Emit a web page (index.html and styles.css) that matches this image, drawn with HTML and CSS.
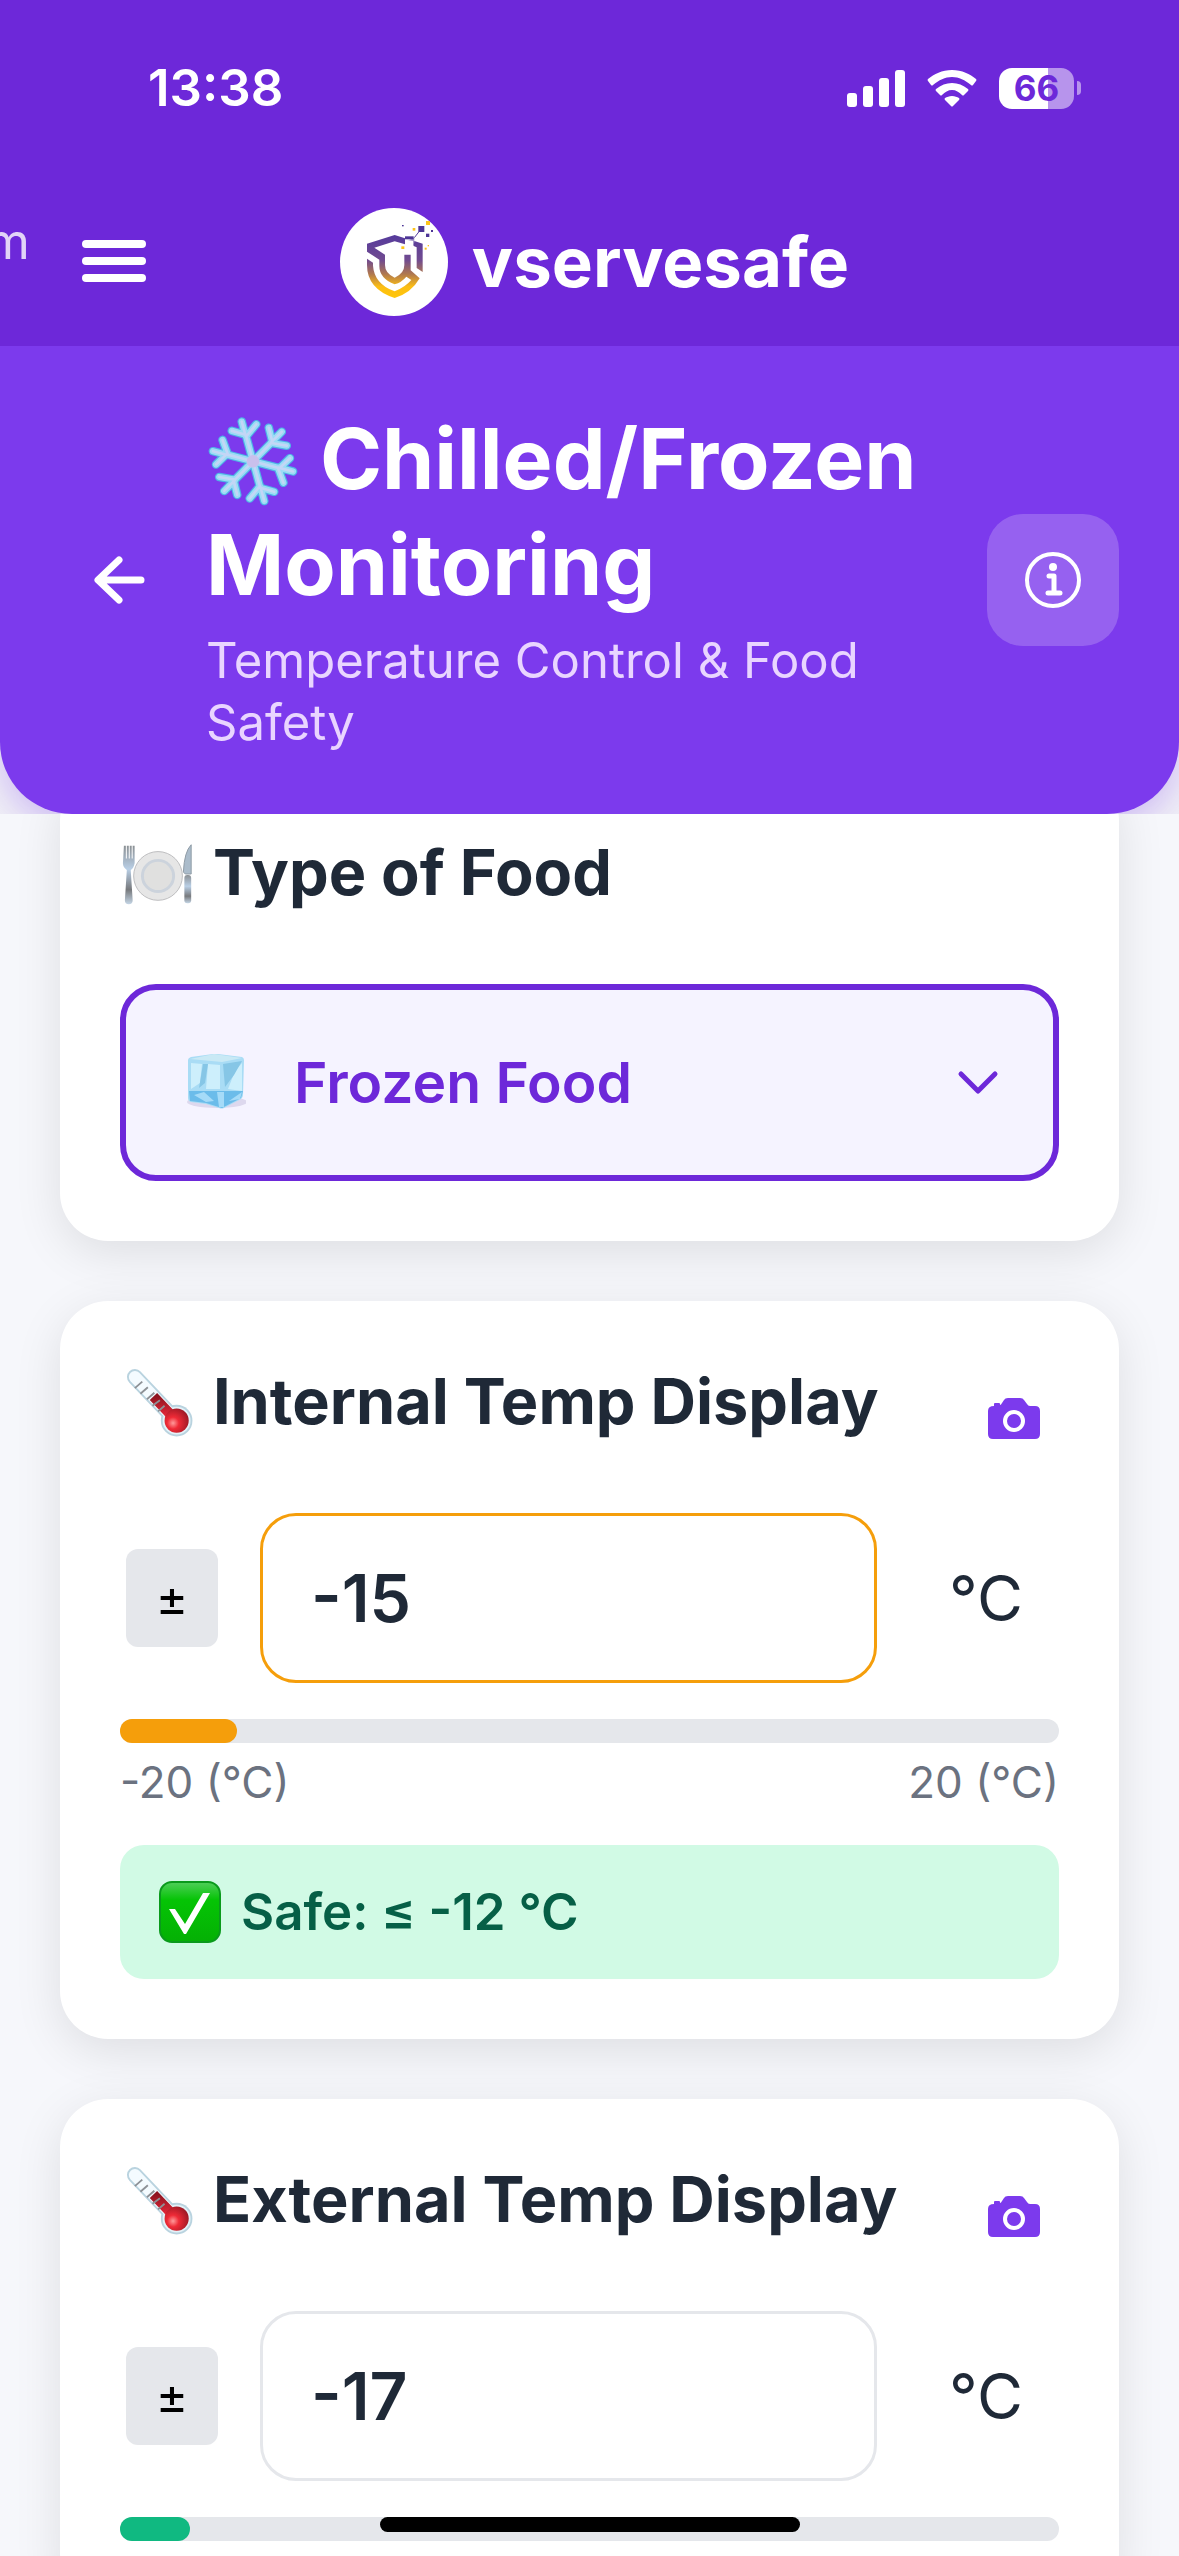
FILE: index.html
```html
<!DOCTYPE html>
<html lang="en">
<head>
  <meta charset="UTF-8">
  <meta name="viewport" content="width=device-width, initial-scale=1.0">
  <title>Chilled/Frozen Monitoring</title>
  <link rel="stylesheet" href="styles.css">
</head>
<body>

  <!-- shared icons -->
  <svg class="sprite" aria-hidden="true">
    <defs>
      <linearGradient id="redBulb" x1="0" y1="0" x2="0" y2="1">
        <stop offset="0" stop-color="#8e1420"/>
        <stop offset="1" stop-color="#e8283a"/>
      </linearGradient>
      <radialGradient id="bulbShine" cx="0.35" cy="0.6" r="0.7">
        <stop offset="0" stop-color="#ff9a9a"/>
        <stop offset="0.35" stop-color="#ef2a36"/>
        <stop offset="1" stop-color="#981824"/>
      </radialGradient>
      <symbol id="thermometer" viewBox="-3 -1 84 84">
        <path d="M13 13 L52 54" stroke="#b9d3df" stroke-width="17" stroke-linecap="round"/>
        <circle cx="58" cy="60" r="17" fill="#b9d3df"/>
        <path d="M13 13 L52 54" stroke="#f4fbff" stroke-width="13" stroke-linecap="round"/>
        <circle cx="58" cy="60" r="15" fill="#e4f2f8"/>
        <path d="M33 34 L54 56" stroke="url(#redBulb)" stroke-width="11"/>
        <path d="M13 25 l8 -7 M19 31 l8 -7 M26 37 l8 -7 M32 44 l8 -6 M38 50 l7 -6" stroke="#8d9196" stroke-width="2"/>
        <circle cx="58" cy="60" r="13" fill="url(#bulbShine)"/>
      </symbol>
      <symbol id="camera" viewBox="0 0 60 60">
        <path fill="#7c3aed" d="M10 17 V15 Q10 14 11 14 H15 Q16 14 16 15 V16 Q17 16 18 14 L20 11 Q21 9 24 9 H36 Q39 9 40 11 L43 15 Q44 17 46 17 H51 Q56 17 56 22 V45 Q56 50 51 50 H9 Q4 50 4 45 V22 Q4 17 10 17 Z"/>
        <circle cx="30" cy="32" r="9" fill="none" stroke="#fff" stroke-width="4"/>
      </symbol>
    </defs>
  </svg>

  <div class="app">
    <div class="top">
      <div class="status-bar">
        <span class="time">13:38</span>
        <div class="status-icons">
          <svg class="signal" viewBox="0 0 58 37" fill="#fff">
            <rect x="0" y="23" width="10" height="14" rx="3"/>
            <rect x="16" y="16" width="10" height="21" rx="3"/>
            <rect x="32" y="8" width="10" height="29" rx="3"/>
            <rect x="48" y="0" width="10" height="37" rx="3"/>
          </svg>
          <svg class="wifi" viewBox="0 0 50 37" fill="#fff">
            <path d="M25 0 C35 0 43 4 49 9 Q50 10 49 11 L46 15 Q45 16 44 15 C38 10 32 7 25 7 C18 7 12 10 6 15 Q5 16 4 15 L1 11 Q0 10 1 9 C7 4 15 0 25 0 Z"/>
            <path d="M25 13 C31 13 36 15 41 19 Q42 20 41 21 L37 25 Q36 26 35 25 C32 22 29 20 25 20 C21 20 18 22 15 25 Q14 26 13 25 L9 21 Q8 20 9 19 C14 15 19 13 25 13 Z"/>
            <path d="M25 26 C28 26 30 27 32 28 Q33 29 32 30 L26 36 Q25 37 24 36 L18 30 Q17 29 18 28 C20 27 22 26 25 26 Z"/>
          </svg>
          <div class="battery">
            <span class="battery-level">66</span>
            <span class="battery-tip"></span>
          </div>
        </div>
      </div>

      <div class="nav-bar">
        <span class="marquee">m</span>
        <button class="menu-btn" aria-label="Menu">
          <span></span><span></span><span></span>
        </button>
        <div class="brand">
          <svg class="logo" viewBox="33 51 324 324">
            <defs>
              <linearGradient id="shield" gradientUnits="userSpaceOnUse" x1="0" y1="132" x2="0" y2="321">
                <stop offset="0" stop-color="#553a9c"/>
                <stop offset="0.4" stop-color="#714b90"/>
                <stop offset="0.62" stop-color="#b0784f"/>
                <stop offset="0.82" stop-color="#fcbe14"/>
                <stop offset="1" stop-color="#ffc60a"/>
              </linearGradient>
            </defs>
            <circle cx="195" cy="213" r="162" fill="#fff"/>
            <g fill="url(#shield)">
              <path d="M114 158 L197 132 L228 142 V160 L197 151 L136 170 L168 191 V222 Q168 247 197 260 Q226 247 226 222 V191 H245 V238 L272 262 Q247 306 197 321 Q114 294 114 222 V203 L132 215 V224 Q136 279 197 301 Q229 288 247 267 L232 257 Q218 274 197 280 Q151 262 151 225 V206 L114 182 Z"/>
              <path d="M256 150 L281 158 V243 L263 231 V169 L254 165 Z"/>
            </g>
            <path d="M256 140 L270 122" stroke="#553a9c" stroke-width="3"/>
            <g fill="#4d3596">
              <rect x="228" y="136" width="26" height="9"/>
              <path d="M232 151 L256 140 V165 Z" opacity="0.5"/>
              <rect x="268" y="105" width="18" height="18"/>
              <rect x="291" y="128" width="10" height="10"/>
              <rect x="306" y="117" width="6" height="6"/>
              <rect x="219" y="102" width="5" height="4"/>
            </g>
            <path d="M229 146 L252 150 V164 L229 160 Z" fill="#fff"/>
            <g fill="#fdc41a">
              <rect x="291" y="90" width="12" height="12"/>
              <rect x="251" y="111" width="8" height="8"/>
              <rect x="217" y="166" width="9" height="8"/>
              <rect x="287" y="170" width="6" height="6"/>
              <rect x="296" y="162" width="4" height="4"/>
            </g>
          </svg>
          <span class="brand-name">vservesafe</span>
        </div>
      </div>

      <header class="page-header">
        <button class="back-btn" aria-label="Back">
          <svg viewBox="0 0 54 50" fill="none" stroke="#fff" stroke-width="7" stroke-linecap="round" stroke-linejoin="round">
            <path d="M27 5 L6 25 L27 45 M7 25 H49"/>
          </svg>
        </button>
        <div class="header-text">
          <h1><svg class="snowflake" viewBox="-10 -14 280 284" fill="none" stroke-linecap="round">
              <g id="flake" stroke="#4fb4e6" stroke-width="26">
                <g id="arms">
                  <path id="arm" d="M130 132 L108 52 M108 52 L66 40 M108 56 L96 12 M110 56 L140 20"/>
                  <use href="#arm" transform="rotate(60 130 132)"/>
                  <use href="#arm" transform="rotate(120 130 132)"/>
                  <use href="#arm" transform="rotate(180 130 132)"/>
                  <use href="#arm" transform="rotate(240 130 132)"/>
                  <use href="#arm" transform="rotate(300 130 132)"/>
                </g>
              </g>
              <use href="#arms" stroke="#9bdcf5" stroke-width="19"/>
              <use href="#arms" stroke="#c3d6f6" stroke-width="8"/>
              <circle cx="130" cy="132" r="19" fill="#c9c0ec"/>
            </svg> Chilled/Frozen Monitoring</h1>
          <p>Temperature Control &amp; Food Safety</p>
        </div>
        <button class="info-btn" aria-label="Information">
          <svg viewBox="0 0 60 60" fill="none" stroke="#fff" stroke-linecap="round" stroke-linejoin="round">
            <circle cx="30" cy="30" r="26" stroke-width="4"/>
            <path d="M26 26 H31 V43 M25 43 H37" stroke-width="5"/>
            <circle cx="30" cy="17" r="4" fill="#fff" stroke="none"/>
          </svg>
        </button>
      </header>
    </div>

    <main class="content">
      <section class="card">
        <div class="card-header">
          <h2><svg class="emoji" viewBox="1 2 80 80">
              <defs>
                <linearGradient id="steel" x1="0" y1="0" x2="0" y2="1">
                  <stop offset="0" stop-color="#8b9094"/>
                  <stop offset="0.4" stop-color="#b9cfe6"/>
                  <stop offset="0.75" stop-color="#77797c"/>
                  <stop offset="1" stop-color="#c5d6e6"/>
                </linearGradient>
              </defs>
              <path fill="url(#steel)" d="M5 13 h2 v13 h1 v-13 h2 v13 h1 v-13 h2 v13 h1 v-13 h2 l0 18 q-1 5 -4 7 l2 31 q0 4 -4 4 q-4 0 -4 -4 l2 -31 q-4 -3 -4 -7 Z"/>
              <circle cx="40" cy="44" r="25" fill="#e6e6e6" stroke="#bcbcbe" stroke-width="1"/>
              <circle cx="40" cy="44" r="16" fill="#e0e0df" stroke="#ccd3dc" stroke-width="3"/>
              <path fill="#abbccb" stroke="#8f9ba6" d="M74 12 V42 H68 L66 40 Q67 19 74 12 Z"/>
              <rect x="67" y="43" width="7" height="29" rx="3" fill="url(#steel)"/>
            </svg> Type of Food</h2>
        </div>
        <div class="food-select">
          <svg class="ice" viewBox="0 0 60 60">
            <ellipse cx="31" cy="49" rx="30" ry="6" fill="#ddd8ee"/>
            <path fill="#a9dcf5" d="M2 7 Q2 5 5 4 L27 1 Q29 1 32 1 L56 4 Q58 5 58 7 L57 42 Q57 44 55 46 L38 55 Q36 56 33 55 L20 51 L5 49 Q2 48 2 45 Z"/>
            <path fill="#c9e9f5" d="M4 6 L28 1 L56 5 L36 9 Z"/>
            <path fill="#cdeffc" d="M5 10 L16 11 L14 30 L5 36 Z M22 11 L34 12 V36 H20 Z M49 18 L56 10 V38 L42 36 Z"/>
            <path fill="#86c6e6" d="M17 11 L22 11 L19 30 L13 35 Z M37 11 L56 8 L48 22 L39 34 Z"/>
            <path fill="#6bbcea" d="M3 38 L36 38 L57 38 L55 45 L36 55 L20 50 L4 48 Z"/>
            <path fill="#a5dbf8" d="M8 42 L18 39 L28 48 L20 49 Z M31 39 L38 39 V54 L33 54 Z M43 48 L56 39 L54 46 Z"/>
          </svg>
          <select id="foodType" aria-label="Type of Food">
            <option>Frozen Food</option>
          </select>
          <svg class="chevron" viewBox="0 0 42 26" fill="none" stroke="#6d28d9" stroke-width="5" stroke-linecap="round" stroke-linejoin="round">
            <path d="M4 4 L21 21 L38 4"/>
          </svg>
        </div>
      </section>

      <section class="card">
        <div class="card-header">
          <h2><svg class="emoji"><use href="#thermometer"/></svg> Internal Temp Display</h2>
          <button class="camera-btn" aria-label="Take photo"><svg><use href="#camera"/></svg></button>
        </div>
        <div class="temp-row">
          <button class="sign-btn">±</button>
          <input class="temp-input warning" type="text" value="-15" aria-label="Internal temperature">
          <span class="unit">°C</span>
        </div>
        <div class="bar"><div class="bar-fill warning" style="width: 12.5%"></div></div>
        <div class="bar-labels">
          <span>-20 (°C)</span>
          <span>20 (°C)</span>
        </div>
        <div class="safe-box">
          <svg class="check" viewBox="0 0 62 62">
            <defs>
              <linearGradient id="green" x1="0" y1="0" x2="0" y2="1">
                <stop offset="0" stop-color="#4fce5a"/>
                <stop offset="0.3" stop-color="#05c405"/>
                <stop offset="1" stop-color="#04b004"/>
              </linearGradient>
            </defs>
            <rect x="1" y="1" width="60" height="60" rx="12" fill="url(#green)" stroke="#0a9a1c" stroke-width="2"/>
            <path d="M10 28 L16 28 L26 43 L44 12 H51 L27 53 H25 Z" fill="#fff"/>
          </svg>
          <span>Safe: ≤ -12 °C</span>
        </div>
      </section>

      <section class="card">
        <div class="card-header">
          <h2><svg class="emoji"><use href="#thermometer"/></svg> External Temp Display</h2>
          <button class="camera-btn" aria-label="Take photo"><svg><use href="#camera"/></svg></button>
        </div>
        <div class="temp-row">
          <button class="sign-btn">±</button>
          <input class="temp-input" type="text" value="-17" aria-label="External temperature">
          <span class="unit">°C</span>
        </div>
        <div class="bar"><div class="bar-fill safe" style="width: 7.5%"></div></div>
      </section>
    </main>

    <div class="home-indicator"></div>
  </div>

</body>
</html>
```

FILE: styles.css
```css
* {
  box-sizing: border-box;
}

body {
  margin: 0;
  font-family: Inter, "Liberation Sans", sans-serif;
  color: #1f2937;
  background-color: #f6f7fb;
}

button {
  border: none;
  background: none;
  padding: 0;
  font-family: inherit;
  cursor: pointer;
}

h1, h2, p {
  margin: 0;
}

svg {
  display: block;
}

.sprite {
  position: absolute;
  width: 0;
  height: 0;
}

.app {
  height: 100vh;
  overflow: hidden;
}

/* top area */
.top {
  position: relative;
  z-index: 1;
  overflow: hidden;
  background-color: #f1f1f6;
}

.status-bar {
  display: flex;
  justify-content: space-between;
  align-items: center;
  padding: 56px 98px 0 148px;
  background-color: #6d28d9;
  color: #fff;
}

.time {
  font-size: 51px;
  line-height: 64px;
  font-weight: 600;
}

.status-icons {
  display: flex;
  align-items: center;
  gap: 22px;
}

.signal {
  width: 58px;
  height: 37px;
}

.wifi {
  width: 50px;
  height: 37px;
}

.battery {
  display: flex;
  align-items: center;
  gap: 3px;
}

.battery-level {
  width: 75px;
  height: 41px;
  border-radius: 13px;
  background: linear-gradient(to right, #fff 66%, #b794ec 66%);
  color: #6d28d9;
  font-size: 35px;
  line-height: 41px;
  font-weight: 700;
  text-align: center;
}

.battery-tip {
  width: 4px;
  height: 14px;
  border-radius: 0 4px 4px 0;
  background-color: #b794ec;
}

.nav-bar {
  position: relative;
  display: flex;
  justify-content: center;
  align-items: center;
  height: 226px;
  padding: 57px 0 0 10px;
  background-color: #6d28d9;
  color: #fff;
}

/* tail of the scrolling notice, leaving on the left */
.marquee {
  position: absolute;
  left: -14px;
  top: 90px;
  font-size: 50px;
  line-height: 62px;
  color: #e2d4f7;
}

.menu-btn {
  position: absolute;
  left: 82px;
  top: 120px;
  display: grid;
  gap: 9px;
}

.menu-btn span {
  width: 64px;
  height: 8px;
  border-radius: 4px;
  background-color: #fff;
}

.brand {
  display: flex;
  align-items: center;
  gap: 24px;
}

.logo {
  width: 108px;
  height: 108px;
}

.brand-name {
  font-size: 69px;
  line-height: 88px;
  font-weight: 700;
}

.page-header {
  display: flex;
  align-items: center;
  gap: 30px;
  padding: 60px;
  border-radius: 0 0 72px 72px;
  background-color: #7c3aed;
  box-shadow: 0 12px 36px rgba(124, 58, 237, 0.3);
  color: #fff;
}

.back-btn {
  flex: none;
  padding: 36px 30px 36px 32px;
}

.back-btn svg {
  width: 54px;
  height: 50px;
}

.header-text {
  flex: 1;
}

.header-text h1 {
  font-size: 84px;
  line-height: 106px;
  font-weight: 700;
}

.header-text p {
  margin-top: 12px;
  font-size: 49px;
  line-height: 62px;
  color: #e9d5ff;
}

.snowflake {
  display: inline-block;
  width: 94px;
  height: 94px;
  vertical-align: -18px;
}

.info-btn {
  flex: none;
  padding: 36px;
  border-radius: 36px;
  background-color: rgba(255, 255, 255, 0.2);
}

.info-btn svg {
  width: 60px;
  height: 60px;
}

/* cards */
.content {
  display: grid;
  grid-template-columns: minmax(0, 1fr);
  gap: 60px;
  margin-top: -42px;
  padding: 0 60px;
}

.card {
  padding: 60px;
  border-radius: 48px;
  background-color: #fff;
  box-shadow: 0 12px 48px rgba(0, 0, 0, 0.1);
}

.card-header {
  display: flex;
  justify-content: space-between;
  height: 116px;
  margin-bottom: 36px;
}

.card-header h2 {
  font-size: 63px;
  line-height: 80px;
  font-weight: 700;
}

.emoji {
  display: inline-block;
  width: 78px;
  height: 78px;
  vertical-align: -18px;
}

.camera-btn {
  padding: 0 15px;
}

.camera-btn svg {
  width: 60px;
  height: 60px;
}

.food-select {
  display: grid;
  grid-template-columns: 60px 1fr 42px;
  align-items: center;
  padding: 0 54px 0 60px;
  height: 197px;
  border: 6px solid #6d28d9;
  border-radius: 36px;
  background-color: #f5f3ff;
}

.ice {
  width: 60px;
  height: 60px;
}

.food-select select {
  appearance: none;
  width: 100%;
  height: 100%;
  padding: 0 0 0 48px;
  border: none;
  outline: none;
  background: none;
  color: #6d28d9;
  font-family: inherit;
  font-size: 57px;
  font-weight: 600;
}

.chevron {
  width: 42px;
  height: 26px;
}

.temp-row {
  display: flex;
  align-items: center;
  margin-bottom: 36px;
}

.sign-btn {
  width: 92px;
  height: 98px;
  margin: 0 42px 0 6px;
  border-radius: 12px;
  background-color: #e5e7eb;
  color: #000;
  font-size: 49px;
}

.temp-input {
  flex: 1;
  min-width: 0;
  height: 170px;
  padding: 0 48px;
  border: 3px solid #e5e7eb;
  border-radius: 36px;
  outline: none;
  background-color: #fff;
  color: #1f2937;
  font-family: inherit;
  font-size: 66px;
  font-weight: 600;
}

.temp-input.warning {
  border-color: #f59e0b;
}

.unit {
  width: 146px;
  margin-left: 36px;
  font-size: 63px;
  text-align: center;
}

.bar {
  height: 24px;
  border-radius: 12px;
  background-color: #e5e7eb;
}

.bar-fill {
  height: 100%;
  border-radius: 12px;
}

.bar-fill.warning {
  background-color: #f59e0b;
}

.bar-fill.safe {
  background-color: #10b981;
}

.bar-labels {
  display: flex;
  justify-content: space-between;
  margin: 12px 0 36px;
  font-size: 44px;
  line-height: 54px;
  color: #6b7280;
}

.safe-box {
  display: flex;
  align-items: center;
  gap: 20px;
  padding: 36px 39px;
  border-radius: 24px;
  background-color: #d1fae5;
  color: #065f46;
  font-size: 51px;
  line-height: 62px;
  font-weight: 600;
}

.check {
  width: 62px;
  height: 62px;
}

.home-indicator {
  position: fixed;
  z-index: 2;
  left: 50%;
  bottom: 24px;
  width: 420px;
  height: 15px;
  margin-left: -210px;
  border-radius: 8px;
  background-color: #000;
}
```
